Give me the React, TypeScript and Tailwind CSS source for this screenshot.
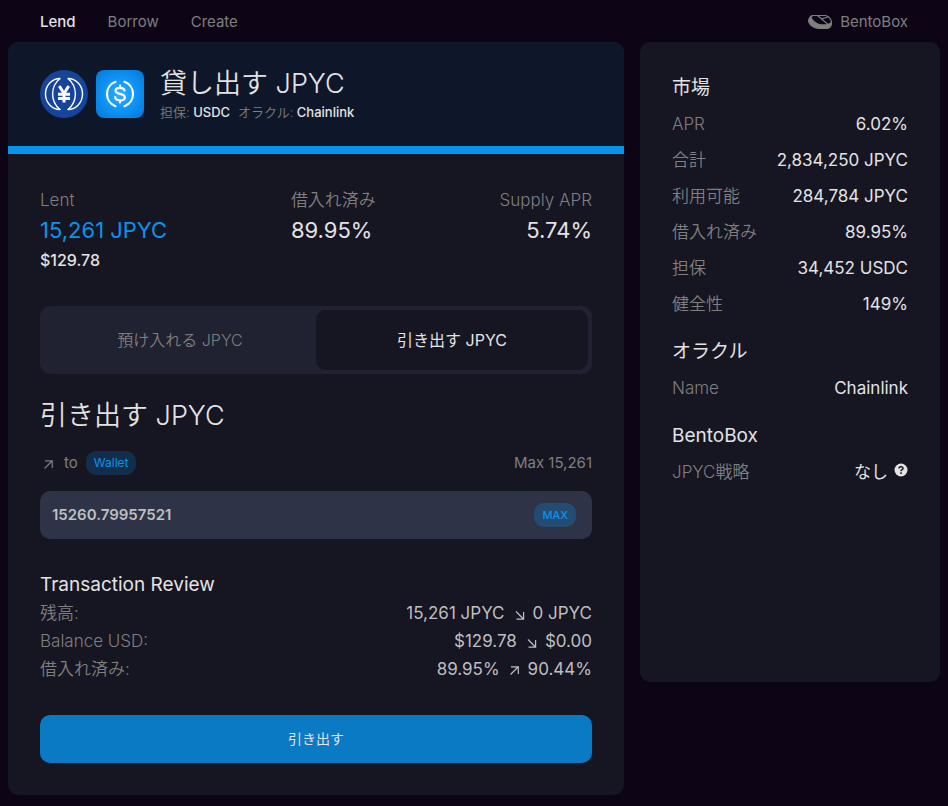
import { ReactNode, useState } from "react";

const marketRows = [
  { label: "APR", value: "6.02%" },
  { label: "合計", value: "2,834,250 JPYC" },
  { label: "利用可能", value: "284,784 JPYC" },
  { label: "借入れ済み", value: "89.95%" },
  { label: "担保", value: "34,452 USDC" },
  { label: "健全性", value: "149%" },
];

const reviewRows = [
  { label: "残高:", from: "15,261 JPYC", to: "0 JPYC", up: false },
  { label: "Balance USD:", from: "$129.78", to: "$0.00", up: false },
  { label: "借入れ済み:", from: "89.95%", to: "90.44%", up: true },
];

const ArrowIcon = ({ up }: { up: boolean }) => (
  <svg
    className="size-4"
    viewBox="0 0 16 16"
    fill="none"
    stroke="currentColor"
    strokeWidth={1.2}
    aria-hidden="true"
  >
    <path d={up ? "M4.5 13.500L12 6M5 5.800H12.300V13" : "M5 6.500L12.500 14M12.600 7V14.200H5.500"} />
  </svg>
);

const JpycLogo = () => (
  <svg className="size-12" viewBox="0 0 48 48" fill="none" aria-hidden="true">
    <circle cx="24" cy="24" r="24" fill="#16449a" />
    <g stroke="#fff" strokeWidth={1.4} strokeLinejoin="round">
      <path d="M20 8.500A14.500 15.500 0 0 0 20 39.500A20 20 0 0 1 20 8.500Z" />
      <path d="M28 8.500A14.500 15.500 0 0 1 28 39.500A20 20 0 0 0 28 8.500Z" />
    </g>
    <path
      d="M19.300 16L24 23.500L28.700 16M24 23.500V32.500M18 24.300H30M18 28.500H30"
      stroke="#fff"
      strokeWidth={3}
    />
  </svg>
);

const UsdcLogo = () => (
  <svg className="size-12 rounded-lg" viewBox="0 0 48 48" fill="none" aria-hidden="true">
    <defs>
      <radialGradient id="usdc" cx="0.5" cy="0.5" r="0.7">
        <stop offset="0" stopColor="#31adff" />
        <stop offset="0.5" stopColor="#0e94f6" />
        <stop offset="1" stopColor="#0377d6" />
      </radialGradient>
    </defs>
    <rect width="48" height="48" fill="url(#usdc)" />
    <g stroke="#fff" strokeWidth={2.2} strokeLinecap="round">
      <path d="M19.500 11.800A13 13 0 0 0 19.500 36.200M28.500 11.800A13 13 0 0 1 28.500 36.200" />
      <path d="M28.500 20.500C28.200 18.600 26.500 17.800 24 17.800C21.300 17.800 19.500 18.900 19.500 20.800C19.500 25 28.800 22.600 28.800 27.200C28.800 29.200 26.900 30.300 24.100 30.300C21.300 30.300 19.400 29.300 19.200 27.200M24 15.500V17.800M24 30.300V32.500" />
    </g>
  </svg>
);

const BentoIcon = () => (
  <svg className="h-4 w-6" viewBox="0 0 24 16" fill="none" aria-hidden="true">
    <path
      d="M0 7C0 4.500 1.500 2 4 1H18C21.500 2.500 24 5 24 7.500V9.500C24 13 21.500 15 18 15H11C6 14.500 0.500 11.500 0 7Z"
      fill="currentColor"
    />
    <path
      d="M3.500 3.500L5 2H17.500C20.500 3.300 22.800 5.500 22.800 7.300C22.800 9 20.500 10 17.500 10.200H12.500C8.500 9.500 5 6.800 3.500 3.500Z"
      fill="#0d0415"
    />
    <path d="M9.500 1.500L19.500 10M13.500 5L20 3" stroke="currentColor" strokeWidth={1.1} />
  </svg>
);

const HelpIcon = () => (
  <svg className="mb-1 size-3.5" viewBox="0 0 14 14" fill="none" role="img" aria-label="Help">
    <circle cx="7" cy="7" r="6.500" fill="#e3e3e3" />
    <path d="M5 5.500C5 3.200 9 3.200 9 5.400C9 6.700 7 6.700 7 8.200" stroke="#161522" strokeWidth={1.500} />
    <rect x="6.200" y="9.300" width="1.600" height="1.600" fill="#161522" />
  </svg>
);

const Stat = ({ label, className, children }: { label: string; className?: string; children: ReactNode }) => (
  <div className={className}>
    <div className="text-[17px] leading-7 font-[350] text-[#7f7f7f]">{label}</div>
    {children}
  </div>
);

const InfoRow = ({ label, children }: { label: string; children: ReactNode }) => (
  <div className="flex items-center justify-between text-[17px] leading-7">
    <dt className="font-[350] text-[#7f7f7f]">{label}</dt>
    <dd className="flex items-center gap-1.5">{children}</dd>
  </div>
);

const Section = ({ title, children }: { title: string; children: ReactNode }) => (
  <section>
    <h2 className="text-[19px] leading-7">{title}</h2>
    <dl className="mt-2 flex flex-col gap-2">{children}</dl>
  </section>
);

const App = () => {
  const [amount, setAmount] = useState("15260.79957521");

  return (
    <div className="min-h-screen bg-[#0d0415] px-2 pb-2 font-['Inter','Noto_Sans_CJK_JP',sans-serif] text-[#e3e3e3]">
      <header className="flex h-[42px] items-center justify-between px-8 pt-0.5 text-[15px] text-[#7f7f7f]">
        <nav className="flex gap-8">
          <a href="#lend" className="font-medium text-[#e3e3e3]">Lend</a>
          <a href="#borrow">Borrow</a>
          <a href="#create">Create</a>
        </nav>
        <a href="#bentobox" className="flex items-center gap-2">
          <BentoIcon />
          BentoBox
        </a>
      </header>

      <div className="grid grid-cols-[1fr_300px] items-start gap-4">
        <main className="overflow-hidden rounded-[10px] bg-[#161522]">
          <div className="flex items-center border-b-8 border-[#0993ec] bg-[#0e1729] px-8 py-6">
            <div className="flex gap-2">
              <JpycLogo />
              <UsdcLogo />
            </div>
            <div className="ml-4">
              <h1 className="text-[27px] leading-9 font-[350]">貸し出す JPYC</h1>
              <p className="flex gap-2 text-[13px] leading-5 font-medium">
                <span><span className="font-[350] text-[#7f7f7f]">担保:</span> USDC</span>
                <span><span className="font-[350] text-[#7f7f7f]">オラクル:</span> Chainlink</span>
              </p>
            </div>
          </div>

          <div className="p-8">
            <div className="flex justify-between">
              <Stat label="Lent">
                <div className="text-[22px] leading-8 text-[#0993ec]">15,261 JPYC</div>
                <div className="text-base leading-7 font-medium">$129.78</div>
              </Stat>
              <Stat label="借入れ済み">
                <div className="text-[22px] leading-8">89.95%</div>
              </Stat>
              <Stat label="Supply APR" className="text-right">
                <div className="text-[22px] leading-8">5.74%</div>
              </Stat>
            </div>

            <div role="tablist" className="mt-8 flex rounded-[10px] bg-[#202231] p-1 text-base">
              <button role="tab" aria-selected="false" className="h-[60px] flex-1 rounded-[10px] font-[350] text-[#7f7f7f]">
                預け入れる JPYC
              </button>
              <button role="tab" aria-selected="true" className="h-[60px] flex-1 rounded-[10px] bg-[#161522]">
                引き出す JPYC
              </button>
            </div>

            <h2 className="mt-6 text-[27px] leading-9 font-[350]">引き出す JPYC</h2>
            <div className="mt-4 flex items-center justify-between text-[15px] leading-[25px] text-[#7f7f7f]">
              <div className="flex items-center gap-2">
                <ArrowIcon up />
                <span>to</span>
                <button className="h-6 rounded-[10px] bg-[#0993ec]/20 px-2 text-xs text-[#0993ec]">
                  Wallet
                </button>
              </div>
              <label htmlFor="amount">Max 15,261</label>
            </div>

            <div className="mt-4 flex h-12 items-center rounded-[10px] bg-[#2e3348] pr-4 pl-3">
              <input
                id="amount"
                className="min-w-0 flex-1 bg-transparent text-[15px] font-semibold text-[#bfbfbf] outline-none"
                value={amount}
                onChange={(e) => setAmount(e.target.value)}
              />
              <button
                className="h-6 rounded-[10px] bg-[#0993ec]/25 px-2 text-[11px] font-medium text-[#0993ec]"
                onClick={() => setAmount("15260.79957521")}
              >
                MAX
              </button>
            </div>

            <h3 className="mt-8 text-[19px] leading-7">Transaction Review</h3>
            <dl className="text-[17px] leading-7">
              {reviewRows.map((row) => (
                <div key={row.label} className="flex items-center justify-between">
                  <dt className="font-[350] text-[#7f7f7f]">{row.label}</dt>
                  <dd className="flex items-center gap-1.5 text-[#bfbfbf]">
                    {row.from}
                    <ArrowIcon up={row.up} />
                    {row.to}
                  </dd>
                </div>
              ))}
            </dl>

            <button className="mt-8 h-12 w-full rounded-[10px] bg-[#0a7ac4] text-sm">引き出す</button>
          </div>
        </main>

        <aside className="flex min-h-[640px] flex-col gap-5 rounded-[10px] bg-[#161522] p-8">
          <Section title="市場">
            {marketRows.map((row) => (
              <InfoRow key={row.label} label={row.label}>{row.value}</InfoRow>
            ))}
          </Section>
          <Section title="オラクル">
            <InfoRow label="Name">Chainlink</InfoRow>
          </Section>
          <Section title="BentoBox">
            <InfoRow label="JPYC戦略">
              なし
              <HelpIcon />
            </InfoRow>
          </Section>
        </aside>
      </div>
    </div>
  );
};

export default App;
